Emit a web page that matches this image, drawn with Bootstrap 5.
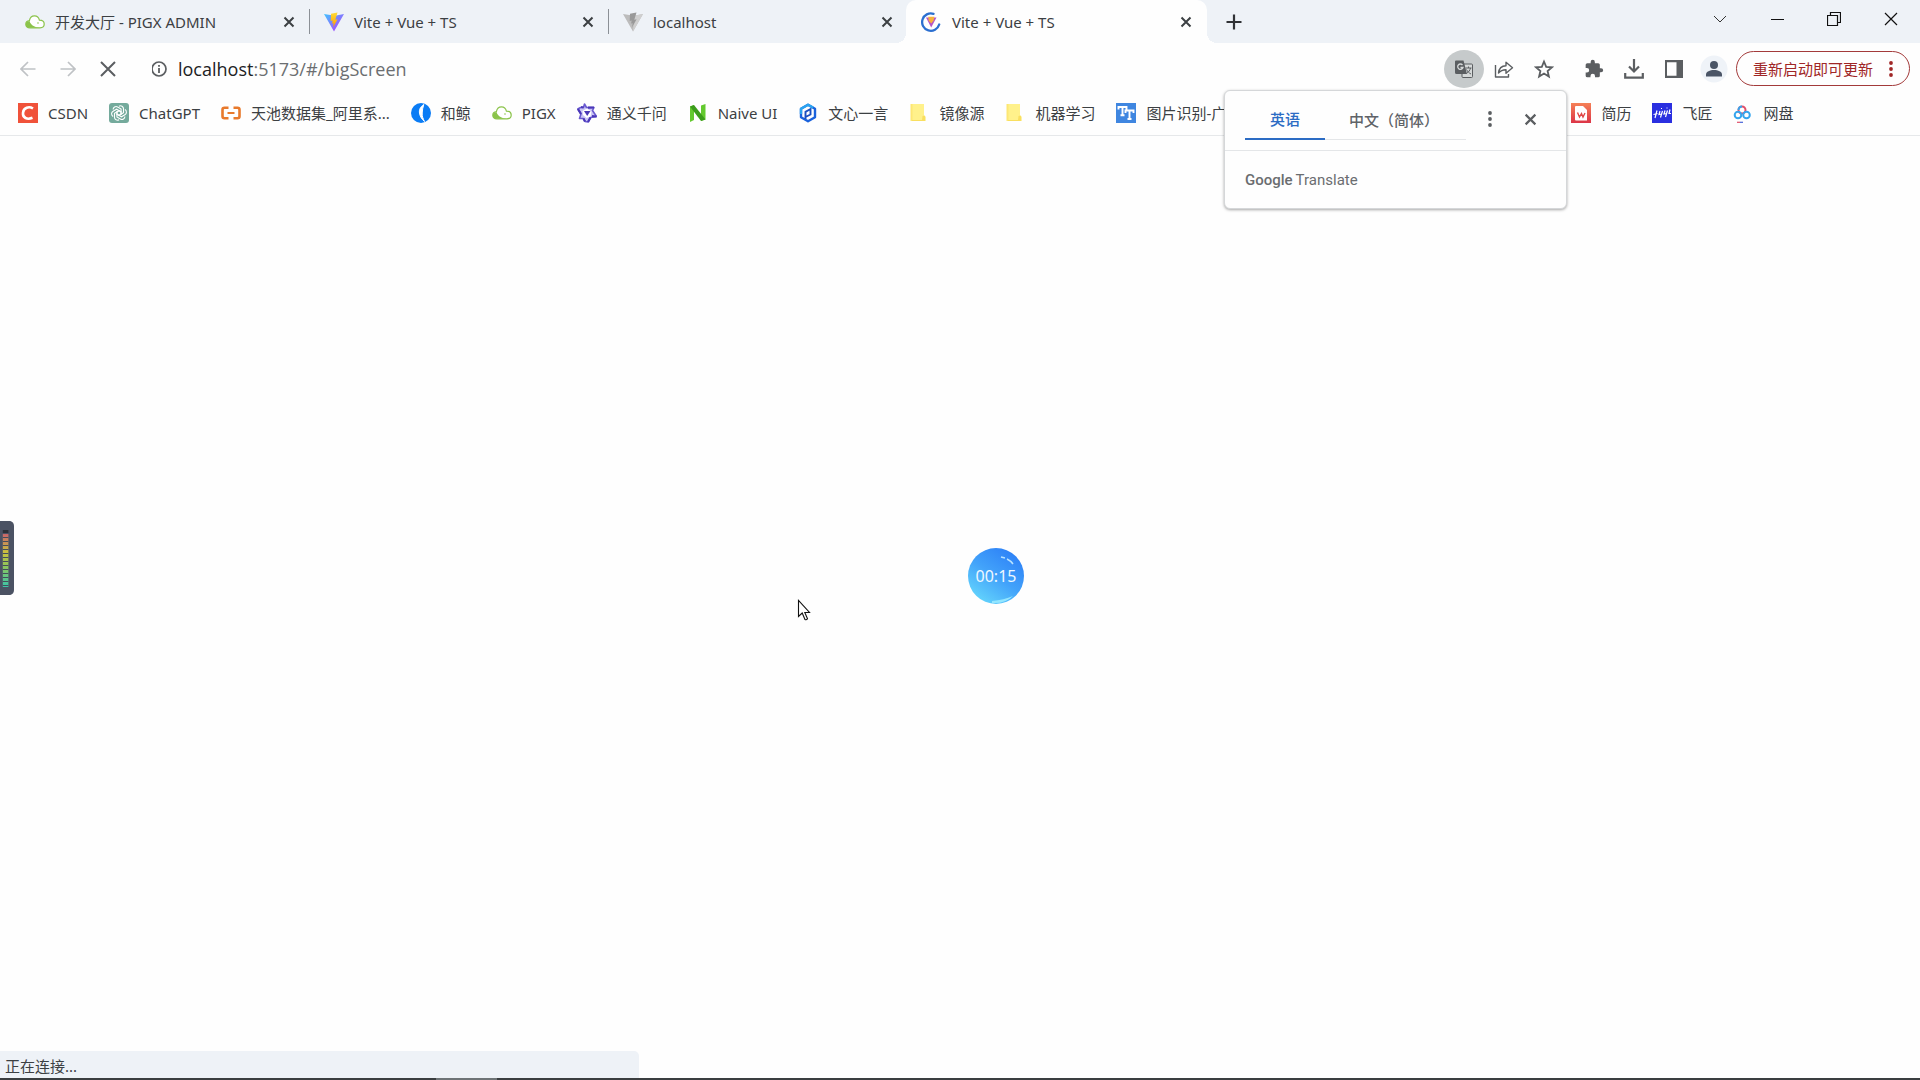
<!DOCTYPE html>
<html lang="zh-CN">
<head>
<meta charset="utf-8">
<meta name="viewport" content="width=device-width, initial-scale=1">
<title>Vite + Vue + TS</title>
<link href="https://cdn.jsdelivr.net/npm/bootstrap@5.3.0/dist/css/bootstrap.min.css" rel="stylesheet">
<style>
  body { font-family: "Noto Sans", "Noto Sans CJK SC", sans-serif; font-size: 15px; line-height: 20px; color: #3c4043; background: #fefefe; }
  button { padding: 0; border: 0; background: none; color: inherit; font: inherit; display: flex; align-items: center; justify-content: center; }
  svg { display: block; flex: none; }

  .tabstrip { height: 43px; background: #eef2f7; padding-left: 11px; }
  .tab { width: 299px; height: 43px; padding: 0 14px; gap: 10px; position: relative; }
  .tab a, .bookmarks a { color: inherit; text-decoration: none; white-space: nowrap; }
  .tab + .tab:not(.current)::before { content: ""; position: absolute; left: -1px; top: 9px; width: 1px; height: 25px; background: #8b9096; }
  .tab.current { background: #fefefe; border-radius: 10px 10px 0 0; width: 301px; margin: 0 -4px 0 -2px; padding-left: 15px; gap: 11px; }
  .tab.current::before, .tab.current::after { content: ""; position: absolute; bottom: 0; width: 10px; height: 10px; }
  .tab.current::before { left: -10px; background: radial-gradient(circle at 0 0, transparent 10px, #fefefe 10px); }
  .tab.current::after { right: -10px; background: radial-gradient(circle at 100% 0, transparent 10px, #fefefe 10px); }
  .tab-close { width: 14px; height: 20px; }
  .tab-new { width: 30px; height: 43px; margin-left: 16px; }
  .window-controls { padding-right: 1px; }
  .window-controls button { width: 57px; height: 37px; color: #111; }

  .toolbar { height: 53px; padding: 0 10px 2px 8px; }
  .tool { width: 40px; height: 40px; color: #5b5e61; }
  .tool.off { color: #bfc2c5; }
  .tool.picked { background: #c6cacb; border-radius: 50%; height: 38px; }
  .tool.apart { margin-left: 10px; }
  .address-text { font-family: "Open Sans", sans-serif; font-size: 18px; line-height: 24px; color: #6b6e71; }
  .address-text b { font-weight: 400; color: #202124; }
  .update-pill { height: 35px; border: 1px solid #a33a3a; border-radius: 18px; color: #a02626; width: 174px; gap: 16px; margin-left: 2px; }

  .bookmarks { height: 40px; padding: 0 18px 5px; border-bottom: 1px solid #e6e8ea; gap: 21px; }
  .bookmarks a { display: flex; align-items: center; gap: 10px; }
  .bookmarks .under-popup { width: 434px; }

  .translate { position: absolute; left: 1224px; top: 90px; width: 343px; background: #fefefe; border: 1px solid #d5d7d9; border-radius: 6px; box-shadow: 0 1px 3px rgba(0,0,0,.35); z-index: 5; }
  .translate-head { height: 60px; padding-left: 20px; border-bottom: 1px solid #e4e6e8; }
  .langs { margin-top: 8px; width: 221px; height: 41px; border-bottom: 1px solid #e4e6e8; font-weight: 500; }
  .langs button { height: 41px; width: 80px; color: #5f6368; }
  .langs button + button { width: 138px; }
  .langs .chosen { color: #2c6cc4; border-bottom: 2px solid #2c6cc4; }
  .brand { height: 57px; padding-left: 20px; font-family: Roboto, sans-serif; font-size: 15px; color: #6a6d70; gap: 3px; }
  .brand b { font-weight: 500; }

  .meter { position: absolute; left: 0; top: 521px; }
  .timer { position: absolute; left: 968px; top: 548px; width: 56px; height: 56px; border-radius: 50%; background: linear-gradient(215deg, #2f84f7 15%, #42a2fa 50%, #66d8fc 92%); color: #eef8ff; font-size: 16px; }
  .timer svg { position: absolute; inset: 0; }
  .pointer { position: absolute; left: 797px; top: 599px; }
  .status { width: 639px; max-width: 50%; height: 27px; background: #eef2f7; border-radius: 0 5px 0 0; padding: 5px 5px 0; }
  .taskline { height: 2px; background: #3a3e40; padding-left: 436px; }
  .taskline div { width: 61px; height: 2px; background: #6e7476; }
</style>
<script src="https://cdn.jsdelivr.net/npm/bootstrap@5.3.0/dist/js/bootstrap.bundle.min.js"></script>
</head>
<body class="min-vh-100 d-flex flex-column position-relative overflow-hidden">
<svg width="0" height="0" class="position-absolute" aria-hidden="true">
  <defs>
    <linearGradient id="gv" x1="0" y1="0" x2="1" y2="1"><stop offset="0" stop-color="#41c4ff"/><stop offset="1" stop-color="#bd34fe"/></linearGradient>
    <linearGradient id="gy" x1="0" y1="0" x2="0" y2="1"><stop offset="0" stop-color="#ffdd35"/><stop offset="1" stop-color="#ff9a00"/></linearGradient>
    <linearGradient id="gr" x1="0" y1="0" x2="0" y2="1"><stop offset="0" stop-color="#f58157"/><stop offset="1" stop-color="#dc3447"/></linearGradient>
    <symbol id="x" viewBox="0 0 12 12"><path d="M1.5 1.5l9 9M10.500 1.500l-9 9" stroke="currentColor" stroke-width="2" fill="none"/></symbol>
    <symbol id="cloud" viewBox="0 0 20 20"><path d="M5 15.800C2.200 15.800.8 14.300.8 12.200c0-2.300 1.800-3.400 3.600-3.600C5 5.600 7 3.900 9.500 3.900c2.700 0 4.300 1.600 4.900 4.200 2.900 0 4.800 1.600 4.800 3.900 0 2.300-1.700 3.800-4.200 3.800z" fill="#fff" stroke="#8bc34a" stroke-width="1.200"/><path d="M4.500 9C1.800 9.300.8 10.800.8 12.400c0 2.200 1.700 3.400 4 3.400H15c-4.500-.3-9-2-10.500-6.800z" fill="#8bc34a"/><circle cx="13" cy="11" r=".8" fill="#8bc34a"/></symbol>
    <symbol id="folder" viewBox="0 0 20 20"><path d="M2 1h13v11.500l1.500 1v4.500H2z" fill="#fff18b"/><path d="M1.500 1h2v17h-2z" fill="#fde774"/><path d="M3 17h10l.5-4 2-.5.8 1.500V18H3z" fill="#f9df60"/></symbol>
    <symbol id="dots" viewBox="0 0 4 18"><g fill="currentColor"><circle cx="2" cy="3" r="1.900"/><circle cx="2" cy="9" r="1.900"/><circle cx="2" cy="15" r="1.900"/></g></symbol>
  </defs>
</svg>

<header>
  <div class="tabstrip d-flex">
    <div class="tab d-flex align-items-center">
      <svg width="20" height="20"><use href="#cloud"/></svg><a href="#" class="flex-grow-1">开发大厅 - PIGX ADMIN</a>
      <button class="tab-close" aria-label="关闭"><svg width="12" height="12"><use href="#x"/></svg></button>
    </div>
    <div class="tab d-flex align-items-center">
      <svg width="20" height="20" viewBox="0 0 20 20"><path d="M0 2l10 17.500L20 2l-9 1.700z" fill="url(#gv)"/><path d="M13.500.500L7 1.800 6.700 9l2-.4-.6 3 1.600-.4-.7 4.300 4.600-8.200-2.300.4z" fill="url(#gy)"/></svg><a href="#" class="flex-grow-1">Vite + Vue + TS</a>
      <button class="tab-close" aria-label="关闭"><svg width="12" height="12"><use href="#x"/></svg></button>
    </div>
    <div class="tab d-flex align-items-center">
      <svg width="20" height="20" viewBox="0 0 20 20"><path d="M0 2l10 17.500L20 2l-9 1.700z" fill="#bcbcbc"/><path d="M11 3.700L20 2 10 19.500z" fill="#cfcfcf"/><path d="M13.500.500L7 1.800 6.700 9l2-.4-.6 3 1.600-.4-.7 4.300 4.600-8.200-2.300.4z" fill="#999"/></svg><a href="#" class="flex-grow-1">localhost</a>
      <button class="tab-close" aria-label="关闭"><svg width="12" height="12"><use href="#x"/></svg></button>
    </div>
    <div class="tab current d-flex align-items-center">
      <svg width="20" height="20" viewBox="0 0 20 20"><path d="M12.500 1.800A8.700 8.700 0 1 0 18.200 12.500" fill="none" stroke="#2b6fd0" stroke-width="2.300" stroke-linecap="round"/><path d="M5 5.500l5.200 10 5.300-10z" fill="#b455c8"/><path d="M7.200 4.800h6.300l-1 4-2.300 2.700-2.500-2.800z" fill="#f7b23b"/></svg><a href="#" class="flex-grow-1">Vite + Vue + TS</a>
      <button class="tab-close" aria-label="关闭"><svg width="12" height="12"><use href="#x"/></svg></button>
    </div>
    <button class="tab-new" aria-label="新标签页"><svg width="16" height="16" viewBox="0 0 16 16"><path d="M8 .500v15M.500 8h15" stroke="#303236" stroke-width="2.200"/></svg></button>
    <div class="window-controls d-flex ms-auto">
      <button aria-label="搜索标签页"><svg width="14" height="14" viewBox="0 0 14 14"><path d="M1 4l6 6 6-6" fill="none" stroke="#333"/></svg></button>
      <button aria-label="最小化"><svg width="14" height="14" viewBox="0 0 14 14"><path d="M1 7.500h13" stroke="currentColor"/></svg></button>
      <button aria-label="还原"><svg width="14" height="14" viewBox="0 0 14 14"><path d="M.5 3.500h10v10h-10zM3.500 3V.500h10v10H11" fill="none" stroke="currentColor" stroke-width="1.200"/></svg></button>
      <button aria-label="关闭窗口"><svg width="14" height="14" viewBox="0 0 14 14"><path d="M1 1l12 12M13 1L1 13" stroke="currentColor" stroke-width="1.200"/></svg></button>
    </div>
  </div>

  <div class="toolbar d-flex align-items-center">
    <button class="tool off" aria-label="后退"><svg width="16" height="16" viewBox="0 0 16 16"><path d="M15.500 8H1.500M8 1L1 8l7 7" fill="none" stroke="currentColor" stroke-width="1.700"/></svg></button>
    <button class="tool off" aria-label="前进"><svg width="16" height="16" viewBox="0 0 16 16"><path d="M.5 8h14M8 1l7 7-7 7" fill="none" stroke="currentColor" stroke-width="1.700"/></svg></button>
    <button class="tool" aria-label="停止"><svg width="16" height="16" viewBox="0 0 16 16"><path d="M1 1l14 14M15 1L1 15" stroke="currentColor" stroke-width="2"/></svg></button>
    <button class="ms-4 me-2" aria-label="网站信息"><svg width="18" height="20" viewBox="1 0 18 20"><circle cx="8" cy="10" r="7" fill="none" stroke="#5b5e61" stroke-width="1.700"/><path d="M8 9v5M8 6v1.800" stroke="#5b5e61" stroke-width="1.800"/></svg></button>
    <a href="#/bigScreen" class="address-text flex-grow-1 text-decoration-none"><b>localhost</b>:5173/#/bigScreen</a>
    <button class="tool picked" aria-label="翻译"><svg width="20" height="20" viewBox="0 0 20 20"><rect x="8" y="5" width="10.500" height="13.500" rx="1" fill="#d5d8d8" stroke="#5b5e61"/><path d="M2 1.500h7.500L13 15H2.500A1.500 1.500 0 0 1 1 13.500v-11A1 1 0 0 1 2 1.500z" fill="#5b5e61"/><path d="M8.500 6A2.700 2.700 0 1 0 9 8.500H6.500" fill="none" stroke="#d5d8d8" stroke-width="1.300"/><path d="M11.500 9h6M14.500 7.500V9M16.500 9c-.5 2.500-2 4-4 5.500M12.500 10.500c1 2 2.500 3.500 4.500 4.500" fill="none" stroke="#5b5e61"/></svg></button>
    <button class="tool" aria-label="分享"><svg width="20" height="20" viewBox="0 0 20 20"><path d="M1.500 6v12h13v-3M4.500 14c.5-4.500 3-7 7.500-7.200V3.200l6.500 5.600-6.500 5.500v-3.600c-3.400 0-5.600 1-7.500 3.300z" fill="none" stroke="currentColor" stroke-width="1.400" stroke-linejoin="round"/></svg></button>
    <button class="tool" aria-label="收藏"><svg width="20" height="20" viewBox="0 0 20 20"><path d="M10 2.500l2.200 5.300 5.700.5-4.300 3.700 1.300 5.600-4.900-3-4.900 3 1.300-5.600-4.300-3.700 5.700-.5z" fill="none" stroke="currentColor" stroke-width="1.800"/></svg></button>
    <button class="tool apart" aria-label="扩展程序"><svg width="20" height="20" viewBox="0 0 24 24"><path fill="currentColor" d="M20.500 11H19V7a2 2 0 0 0-2-2h-4V3.500a2.500 2.500 0 0 0-5 0V5H4a2 2 0 0 0-2 2v3.800h1.500a2.700 2.700 0 0 1 0 5.400H2V20a2 2 0 0 0 2 2h3.800v-1.500a2.700 2.700 0 0 1 5.400 0V22H17a2 2 0 0 0 2-2v-4h1.500a2.500 2.500 0 0 0 0-5z"/></svg></button>
    <button class="tool" aria-label="下载"><svg width="20" height="20" viewBox="0 0 20 20"><path d="M10 0v12M5 7.500l5 5 5-5M1.200 14v4.600h17.600V14" fill="none" stroke="currentColor" stroke-width="2.200"/></svg></button>
    <button class="tool" aria-label="侧边栏"><svg width="18" height="18" viewBox="0 0 18 18"><path d="M0 0h18v18H0zM2 2.300v13.400h9.500V2.300z" fill="currentColor" fill-rule="evenodd"/></svg></button>
    <button class="tool" aria-label="用户"><svg width="28" height="28" viewBox="0 0 28 28"><circle cx="14" cy="14" r="13.500" fill="#eff3f8"/><circle cx="14" cy="10" r="4" fill="#4b5566"/><path d="M6 21.500v-2c0-3 4-4.500 8-4.500s8 1.500 8 4.500v2z" fill="#4b5566"/></svg></button>
    <button class="update-pill"><span>重新启动即可更新</span><svg width="4" height="18"><use href="#dots"/></svg></button>
  </div>

  <nav class="bookmarks d-flex align-items-center">
    <a href="#"><svg width="20" height="20" viewBox="0 0 20 20"><path d="M0 0h20v20H0z" fill="#f0523a"/><path d="M15 5.500C11 3 5.500 4.500 5 9.800c-.5 5 4 7.200 9.500 5" fill="none" stroke="#fff" stroke-width="2.600"/></svg>CSDN</a>
    <a href="#"><svg width="20" height="20" viewBox="0 0 20 20"><rect width="20" height="20" rx="3" fill="#74aa9c"/><g fill="none" stroke="#fff" stroke-width="1.100"><path id="pt" d="M10 3.200c2-1.200 4.500.2 4.500 2.600v4L10 12.300 7.500 11"/><use href="#pt" transform="rotate(60 10 10)"/><use href="#pt" transform="rotate(120 10 10)"/><use href="#pt" transform="rotate(180 10 10)"/><use href="#pt" transform="rotate(240 10 10)"/><use href="#pt" transform="rotate(300 10 10)"/></g></svg>ChatGPT</a>
    <a href="#"><svg width="20" height="20" viewBox="0 0 20 20"><path d="M7.500 4.800H3.500a2 2 0 0 0-2 2v6.400a2 2 0 0 0 2 2h4M12.500 4.800h4a2 2 0 0 1 2 2v6.400a2 2 0 0 1-2 2h-4" fill="none" stroke="#e8792b" stroke-width="2.600"/><path d="M6.500 10h7" stroke="#e8792b" stroke-width="2"/></svg>天池数据集_阿里系...</a>
    <a href="#"><svg width="20" height="20" viewBox="0 0 20 20"><circle cx="10" cy="10" r="10" fill="#0a7cf5"/><path d="M12.800 1.500C9 4 8 7 8.500 10c.4 3 2 6 5 8.500-1.500-3-2.500-5-2.300-8.500.1-3 .6-5.500 1.600-8.500z" fill="#fff" stroke="#fff"/></svg>和鲸</a>
    <a href="#"><svg width="20" height="20"><use href="#cloud"/></svg>PIGX</a>
    <a href="#"><svg width="20" height="20" viewBox="0 0 20 20"><path d="M7.500 1L9.500 4.500H17L15.500 7.500 19.500 13.500 17 14 13.500 14.500 11 19 8 18.500 6.500 15.500 2.500 15.500 4 11 .8 6 3.500 4.500 6.500 4.500z" fill="#c9c4f4" stroke="#6a5ad0" stroke-width="1.600" stroke-linejoin="round"/><path d="M1 6l3 5M6.500 4.500L4 4M17 4.500l-6 .2M19.500 13.500l-4.500-.3M11 19l2.500-4.500M6.500 15.500L8 18.500" stroke="#4a37b8" stroke-width="2.200"/><path d="M10 5.500l4.500 3-1 5-4 1.500L6 12l-.5-4z" fill="#fff"/><path d="M7 8h6.500l-3.300 5z" fill="#4937b5"/></svg>通义千问</a>
    <a href="#"><svg width="20" height="20" viewBox="0 0 20 20"><path d="M2 3.500L6 2v15l-4 2zM13 2.500L17.500 1v15.500L13 18z" fill="#63c92e"/><path d="M2 3.500L6 2l11.500 14.500L13 18z" fill="#3c9c1c"/></svg>Naive UI</a>
    <a href="#"><svg width="20" height="20" viewBox="0 0 20 20"><path d="M10 1.800L3 5.800v8.400l7 4 7-4V5.800z" fill="none" stroke="#1a62dc" stroke-width="2.400" stroke-linejoin="round"/><path d="M3 11V5.800l7-4 5 2.800" fill="none" stroke="#2aa4f0" stroke-width="2.400" stroke-linejoin="round"/><path d="M7.500 16V8.800L12.500 6v5.500l-5 2.500" fill="none" stroke="#1a4fc0" stroke-width="1.900"/></svg>文心一言</a>
    <a href="#"><svg width="20" height="20"><use href="#folder"/></svg>镜像源</a>
    <a href="#"><svg width="20" height="20"><use href="#folder"/></svg>机器学习</a>
    <a href="#" class="under-popup"><svg width="20" height="20" viewBox="0 0 20 20"><path d="M0 0h20v20H0z" fill="#3f86e0"/><path d="M2.500 6.500V4h8v2.500M6.500 4v8M4.500 12.200h4M9.500 10V7.500h8V10M13.500 7.500v8.300M11.500 16h4" fill="none" stroke="#fff" stroke-width="1.900"/></svg>图片识别-广告</a>
    <a href="#"><svg width="20" height="20" viewBox="0 0 20 20"><path d="M0 0h20v20H0z" fill="url(#gr)"/><path d="M5 3h7l4 4v10.500H5a1 1 0 0 1-1-1V4a1 1 0 0 1 1-1z" fill="#fff"/><path d="M6.500 9.500l2 4.500 2-3.500 1.500 3.500 2-4" fill="none" stroke="#e04848" stroke-width="1.400"/></svg>简历</a>
    <a href="#"><svg width="20" height="20" viewBox="0 0 20 20"><path d="M0 0h20v20H0z" fill="#2a2fe0"/><path d="M1.500 11.500l4-1M5 7.500L3 15M8 8l-1 3.500 2.500-.5 1-3-2 6.500M13 7.500l-1 3.500 2.500-.5 1-3-2 6.500M18 6.500l-1 4h2M9 5.500h1M14.500 5h1" fill="none" stroke="#fff" stroke-width="1.200"/></svg>飞匠</a>
    <a href="#"><svg width="20" height="20" viewBox="0 0 20 20"><g fill="none" stroke-width="2"><circle cx="9" cy="7" r="3.500" stroke="#e0506a"/><circle cx="5" cy="12" r="3.300" stroke="#35a5ee"/><circle cx="13.500" cy="12" r="3.300" stroke="#35a5ee"/><path d="M5.500 7A3.500 3.500 0 0 1 9 3.500" stroke="#35a5ee"/></g><path d="M4 19.300h3" stroke="#e0506a" stroke-width="1.200"/><path d="M7 19.300h3" stroke="#4662d8" stroke-width="1.200"/></svg>网盘</a>
  </nav>
</header>

<section class="translate">
  <div class="translate-head d-flex">
    <div class="langs d-flex">
      <button class="chosen">英语</button>
      <button>中文（简体）</button>
    </div>
    <button class="tool ms-1 mt-2" aria-label="更多选项"><svg width="4" height="18"><use href="#dots"/></svg></button>
    <button class="tool mt-2" aria-label="关闭翻译"><svg width="13" height="13"><use href="#x"/></svg></button>
  </div>
  <div class="brand d-flex align-items-center"><b>Google</b><span>Translate</span></div>
</section>

<main class="flex-grow-1">
  <svg class="meter" width="14" height="75" viewBox="0 0 15 75" preserveAspectRatio="none">
    <defs><linearGradient id="lvl" x1="0" y1="0" x2="0" y2="1"><stop offset="0" stop-color="#c9646a"/><stop offset=".35" stop-color="#c9c23e"/><stop offset=".6" stop-color="#8fc65a"/><stop offset="1" stop-color="#3cc4a8"/></linearGradient>
    <pattern id="bars" width="8" height="4" patternUnits="userSpaceOnUse"><path d="M0 0h8v1H0z" fill="#454c5c"/></pattern></defs>
    <path d="M0 0h11q4 1 4 5v64q0 4-4 5H0z" fill="#4b5263"/><path d="M3 9h6v3H3z" fill="#2c3038"/><path d="M3 13h6v53H3z" fill="url(#lvl)"/><path d="M3 13h6v53H3z" fill="url(#bars)"/>
  </svg>
  <div class="timer d-flex align-items-center justify-content-center"><svg width="56" height="56" viewBox="0 0 56 56"><path d="M33 9l4 1M39 11q4 2 6 5" fill="none" stroke="#b7e2ff" stroke-width="1.500"/><path d="M24 53q12-1 21-5-8 8-21 7z" fill="#93e6ff"/></svg><span class="position-relative">00:15</span></div>
  <svg class="pointer" width="14" height="23" viewBox="0 0 14 23"><path d="M1.500 1.500v16l3.700-3.500 2.800 6.500q1.500.8 2.500-.8L7.800 13.500h4.700z" fill="#fff" stroke="#111" stroke-width="1.100"/></svg>
</main>
<footer>
  <div class="status">正在连接...</div>
  <div class="taskline"><div></div></div>
</footer>
</body>
</html>
